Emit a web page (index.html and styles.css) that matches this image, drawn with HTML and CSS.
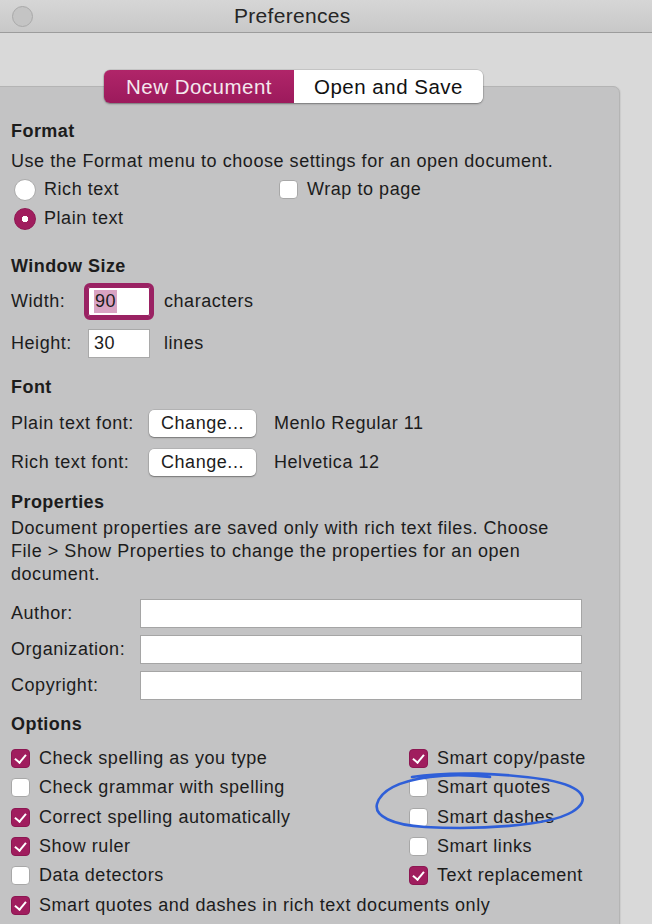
FILE: index.html
```html
<!DOCTYPE html>
<html>
<head>
<meta charset="utf-8">
<title>Preferences</title>
<link rel="stylesheet" href="styles.css">
</head>
<body>
<div class="screen">
  <div class="titlebar">
    <span class="light"></span>
    <span class="title">Preferences</span>
  </div>
  <div class="window">
    <div class="tabs">
      <div class="tab active">New Document</div>
      <div class="tab">Open and Save</div>
    </div>
    <div class="panel">
      <div class="row heading h-format">Format</div>
      <div class="row desc">Use the Format menu to choose settings for an open document.</div>
      <div class="row radio-row r1">
        <span class="radio"></span><span class="lbl radio-lbl">Rich text</span>
        <span class="wrap"><span class="cb"></span><span class="lbl">Wrap to page</span></span>
      </div>
      <div class="row radio-row r2">
        <span class="radio on"></span><span class="lbl">Plain text</span>
      </div>

      <div class="row heading h-window">Window Size</div>
      <div class="row size-row w-row">
        <span class="size-label">Width:</span>
        <span class="field focus"><span class="sel">90</span></span>
        <span class="unit">characters</span>
      </div>
      <div class="row size-row h-row">
        <span class="size-label">Height:</span>
        <span class="field">30</span>
        <span class="unit">lines</span>
      </div>

      <div class="row heading h-font">Font</div>
      <div class="row font-row f1">
        <span class="font-label">Plain text font:</span>
        <span class="btn">Change...</span>
        <span class="font-name">Menlo Regular 11</span>
      </div>
      <div class="row font-row f2">
        <span class="font-label">Rich text font:</span>
        <span class="btn">Change...</span>
        <span class="font-name">Helvetica 12</span>
      </div>

      <div class="row heading h-props">Properties</div>
      <p class="para">Document properties are saved only with rich text files. Choose<br>File &gt; Show Properties to change the properties for an open<br>document.</p>
      <div class="row prop-row p1"><span class="prop-label">Author:</span><span class="text-field"></span></div>
      <div class="row prop-row p2"><span class="prop-label">Organization:</span><span class="text-field"></span></div>
      <div class="row prop-row p3"><span class="prop-label">Copyright:</span><span class="text-field"></span></div>

      <div class="row heading h-opts">Options</div>
      <div class="options">
        <div class="opt"><span class="cb on"></span>Check spelling as you type</div>
        <div class="opt right"><span class="cb on"></span>Smart copy/paste</div>
        <div class="opt"><span class="cb"></span>Check grammar with spelling</div>
        <div class="opt right"><span class="cb"></span>Smart quotes</div>
        <div class="opt"><span class="cb on"></span>Correct spelling automatically</div>
        <div class="opt right"><span class="cb"></span>Smart dashes</div>
        <div class="opt"><span class="cb on"></span>Show ruler</div>
        <div class="opt right"><span class="cb"></span>Smart links</div>
        <div class="opt"><span class="cb"></span>Data detectors</div>
        <div class="opt right"><span class="cb on"></span>Text replacement</div>
        <div class="opt span"><span class="cb on"></span>Smart quotes and dashes in rich text documents only</div>
      </div>
    </div>
  </div>
  <svg class="annot" width="652" height="924" viewBox="0 0 652 924">
    <path d="M 412 777 C 450 771, 505 773, 548 780 C 584 787, 592 800, 572 812 C 548 826, 478 830, 425 827 C 392 825, 374 816, 377 804 C 381 790, 400 781, 430 777 C 452 774, 472 775, 490 777" fill="none" stroke="#2f5fd8" stroke-width="2.6" stroke-linecap="round"/>
  </svg>
</div>
</body>
</html>
```
FILE: styles.css
```css
* { box-sizing: border-box; }
html, body { margin: 0; padding: 0; }
body {
  width: 652px;
  height: 924px;
  overflow: hidden;
  background: #d9d9d9;
  font-family: "Liberation Sans", Arial, sans-serif;
  color: #1c1c1c;
}
.screen { position: relative; width: 652px; height: 924px; overflow: hidden; }

.titlebar {
  height: 33px;
  background: linear-gradient(#d6d6d6, #c8c8c8);
  border-bottom: 1px solid #9c9c9c;
  display: flex;
  align-items: center;
  padding-left: 12px;
}
.light {
  width: 21px; height: 21px;
  border-radius: 50%;
  border: 1px solid #a9a9a9;
  background: #c4c4c4;
  flex: none;
}
.title {
  font-size: 21px;
  margin-left: 201px;
  color: #262626;
  letter-spacing: 0.3px;
}

.window { padding-top: 37px; }

.tabs {
  position: relative;
  z-index: 2;
  margin-left: 104px;
  width: 379px;
  height: 33px;
  display: flex;
  border-radius: 6px;
  box-shadow: 0 1px 2px rgba(0,0,0,0.35), 0 0 0 0.5px rgba(0,0,0,0.15);
  overflow: hidden;
}
.tab {
  flex: none;
  width: 189px;
  background: #fff;
  font-size: 20.5px;
  letter-spacing: 0.5px;
  display: flex;
  align-items: center;
  justify-content: center;
  color: #111;
}
.tab.active {
  width: 190px;
  background: linear-gradient(#b02569, #9c1a5c);
  color: #f4e8ee;
}

.panel {
  margin-top: -17px;
  margin-left: -10px;
  width: 630px;
  height: 900px;
  background: #c3c3c4;
  border: 1px solid #b4b4b4;
  border-radius: 7px;
  padding: 30px 0 0 20px;
  box-shadow: 1px 0 1px rgba(0,0,0,0.06);
}

.row {
  display: flex; align-items: center; height: 28px;
  font-size: 18px; letter-spacing: 0.55px;
  white-space: nowrap;
}
.heading { font-weight: bold; font-size: 18px; letter-spacing: 0.45px; }
.desc { margin-top: 2px; }

.radio-row { height: 29px; }
.radio {
  width: 22px; height: 22px;
  border-radius: 50%;
  background: #fff;
  border: 1px solid #aaa;
  margin-left: 3px;
  margin-right: 8px;
  flex: none;
}
.radio.on {
  background: radial-gradient(circle, #fff 0 3px, #a01d5e 3.5px);
  border-color: #8e1752;
}
.radio-lbl { width: 235px; flex: none; }
.wrap { display: flex; align-items: center; }
.cb {
  width: 19px; height: 19px;
  border-radius: 4px;
  background: #fff;
  border: 1px solid #a8a8a8;
  flex: none;
  margin-right: 9px;
  position: relative;
}
.cb.on { background: #a01d5e; border-color: #8c1752; }
.cb.on::after {
  content: "";
  position: absolute;
  left: 5px; top: 2px;
  width: 5px; height: 9px;
  border-right: 2px solid #fff;
  border-bottom: 2px solid #fff;
  transform: rotate(40deg);
}

.h-window { margin-top: 19px; }
.size-row { height: 38px; }
.w-row { margin-top: 2px; }
.h-row { height: 30px; margin-top: 8px; }
.size-label { width: 77px; flex: none; }
.field {
  width: 62px; height: 29px;
  background: #fff;
  border: 1px solid #a9a9a9;
  flex: none;
  display: flex;
  align-items: center;
  padding-left: 5px;
}
.field.focus {
  outline: 4px solid #9a2263;
  outline-offset: 0;
  border-radius: 2px;
  border-color: #9a2263;
}
.sel { background: #d9a3c3; padding: 1px 1px; }
.unit { margin-left: 14px; }

.h-font { margin-top: 15px; }
.f1 { margin-top: 8px; }
.f2 { margin-top: 11px; }
.font-label { width: 138px; flex: none; }
.btn {
  width: 107px; height: 27px;
  background: #fff;
  border-radius: 5px;
  box-shadow: 0 1px 1.5px rgba(0,0,0,0.35), 0 0 0 0.5px rgba(0,0,0,0.15);
  display: flex; align-items: center; justify-content: center;
  flex: none;
}
.font-name { margin-left: 18px; }

.h-props { margin-top: 12px; }
.para {
  margin: 1px 0 0 0;
  font-size: 18px;
  letter-spacing: 0.55px;
  line-height: 23px;
  white-space: nowrap;
}
.prop-row { height: 30px; }
.p1 { margin-top: 12px; }
.p2, .p3 { margin-top: 6px; }
.prop-label { width: 129px; flex: none; }
.text-field {
  width: 442px; height: 29px;
  background: #fff;
  border: 1px solid #a5a5a5;
  flex: none;
}

.h-opts { margin-top: 10px; }
.options {
  margin-top: 6px;
  display: grid;
  grid-template-columns: 398px auto;
  grid-auto-rows: 29.3px;
}
.opt {
  display: flex; align-items: center;
  font-size: 18px; letter-spacing: 0.55px;
  white-space: nowrap;
}
.opt.span { grid-column: 1 / span 2; }

.annot { position: absolute; left: 0; top: 0; pointer-events: none; }
```
